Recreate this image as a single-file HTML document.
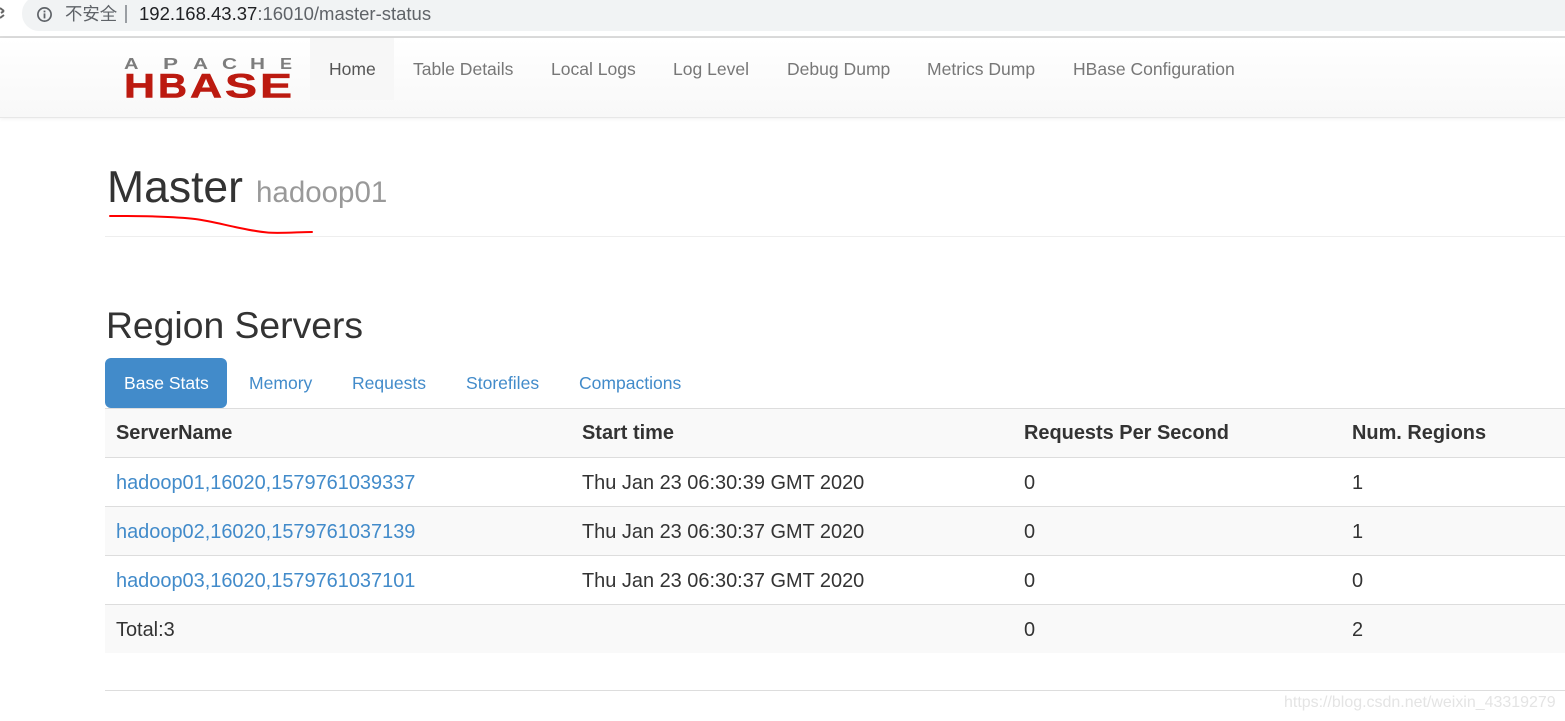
<!DOCTYPE html>
<html lang="en">
<head>
<meta charset="utf-8">
<title>Master: hadoop01</title>
<style>
html,body{margin:0;padding:0;background:#fff;}
body{width:1565px;height:721px;overflow:hidden;position:relative;font-family:"Liberation Sans","Noto Sans CJK SC",sans-serif;color:#333;}
.a{position:absolute;white-space:nowrap;}
.n{font-size:17.55px;line-height:24px;top:57px;color:#777;}
.t{font-size:17.55px;line-height:24px;top:371px;color:#428bca;}
.h{font-size:19.95px;font-weight:bold;line-height:28px;top:419px;color:#333;}
.c{font-size:19.95px;line-height:28px;color:#333;}
.l{color:#428bca;}
.r{position:absolute;left:105px;width:1460px;}
.ap{font-family:"Liberation Sans",sans-serif;font-weight:bold;font-size:16px;fill:#7d7d7d;}
.hb{font-family:"Liberation Sans",sans-serif;font-weight:bold;font-size:34.5px;fill:#bc1a10;stroke:#bc1a10;stroke-width:.6;}
</style>
</head>
<body>
<!-- browser bar -->
<div class="a" style="left:0;top:0;width:1565px;height:36px;background:#fff;"></div>
<div class="a" style="left:22px;top:-4px;width:1543px;height:35px;background:#f1f3f4;border-radius:17px 0 0 17px;"></div>
<svg class="a" style="left:0;top:4px" width="8" height="18" viewBox="0 0 8 18"><path d="M0 4 L4 7 M4 7 L1 9 M0 14 L4 11" stroke="#666" stroke-width="2" fill="none"/></svg>
<svg class="a" style="left:36px;top:6px" width="17" height="17" viewBox="0 0 17 17"><circle cx="8.5" cy="8.5" r="6.6" fill="none" stroke="#5f6368" stroke-width="1.7"/><rect x="7.6" y="7.4" width="1.8" height="5" fill="#5f6368"/><rect x="7.6" y="4.6" width="1.8" height="1.8" fill="#5f6368"/></svg>
<div class="a" style="left:65px;top:1.5px;font-size:17.4px;line-height:24px;color:#5f6368;font-family:'Noto Sans CJK SC','Liberation Sans',sans-serif;">不安全</div>
<div class="a" style="left:125px;top:5px;width:2px;height:18px;background:#9a9ea3;"></div>
<div class="a" style="left:139px;top:2px;font-size:18.5px;line-height:24px;color:#5f6368;"><span style="color:#202124">192.168.43.37</span>:16010/master-status</div>
<!-- navbar -->
<div class="a" style="left:0;top:36px;width:1565px;height:2px;background:#dcdcdc;"></div>
<div class="a" style="left:0;top:38px;width:1565px;height:79px;background:linear-gradient(#fff,#f8f8f8);border-bottom:1px solid #e7e7e7;box-shadow:0 1px 4px rgba(0,0,0,.06);"></div>
<div class="a" style="left:310px;top:38px;width:84px;height:62px;background:#f7f7f7;"></div>
<svg class="a" style="left:120px;top:54px" width="176" height="46" viewBox="0 0 176 46">
<text class="ap" x="4" y="15" textLength="14.5" lengthAdjust="spacingAndGlyphs">A</text>
<text class="ap" x="43" y="15" textLength="15" lengthAdjust="spacingAndGlyphs">P</text>
<text class="ap" x="73" y="15" textLength="15" lengthAdjust="spacingAndGlyphs">A</text>
<text class="ap" x="102" y="15" textLength="15" lengthAdjust="spacingAndGlyphs">C</text>
<text class="ap" x="130" y="15" textLength="15" lengthAdjust="spacingAndGlyphs">H</text>
<text class="ap" x="160" y="15" textLength="12" lengthAdjust="spacingAndGlyphs">E</text>
<text class="hb" x="4" y="43.6" textLength="31" lengthAdjust="spacingAndGlyphs">H</text>
<text class="hb" x="38" y="43.6" textLength="29" lengthAdjust="spacingAndGlyphs">B</text>
<text class="hb" x="70" y="43.6" textLength="32" lengthAdjust="spacingAndGlyphs">A</text>
<text class="hb" x="105" y="43.6" textLength="32" lengthAdjust="spacingAndGlyphs">S</text>
<text class="hb" x="140" y="43.6" textLength="32" lengthAdjust="spacingAndGlyphs">E</text>
</svg>
<div class="a n" style="left:329px;color:#555;">Home</div>
<div class="a n" style="left:413px;">Table Details</div>
<div class="a n" style="left:551px;">Local Logs</div>
<div class="a n" style="left:673px;">Log Level</div>
<div class="a n" style="left:787px;">Debug Dump</div>
<div class="a n" style="left:927px;">Metrics Dump</div>
<div class="a n" style="left:1073px;">HBase Configuration</div>
<!-- header -->
<div class="a" style="left:107px;top:161px;font-size:44.5px;line-height:54px;color:#333;">Master</div>
<div class="a" style="left:256px;top:175px;font-size:29.5px;line-height:36px;color:#999;">hadoop01</div>
<svg class="a" style="left:105px;top:210px" width="212" height="28" viewBox="0 0 212 28"><path d="M5 6 C20 6 38 6 50 6.5 C65 7 78 7.5 90 9 C105 11 118 14.5 130 17 C145 20 156 22.5 167 22.8 C182 23.2 195 22 207 22" fill="none" stroke="#f00" stroke-width="2" stroke-linecap="round"/></svg>
<div class="r" style="top:236px;height:1px;background:#eee;"></div>
<div class="a" style="left:106px;top:302px;font-size:37.3px;line-height:46px;color:#333;">Region Servers</div>
<!-- tabs -->
<div class="a" style="left:105px;top:358px;width:122px;height:50px;background:#428bca;border-radius:6px;"></div>
<div class="a t" style="left:124px;color:#fff;">Base Stats</div>
<div class="a t" style="left:249px;">Memory</div>
<div class="a t" style="left:352px;">Requests</div>
<div class="a t" style="left:466px;">Storefiles</div>
<div class="a t" style="left:579px;">Compactions</div>
<!-- table -->
<div class="r" style="top:408px;height:1px;background:#ddd;"></div>
<div class="r" style="top:409px;height:48px;background:#f9f9f9;"></div>
<div class="r" style="top:457px;height:1px;background:#ddd;"></div>
<div class="r" style="top:506px;height:1px;background:#ddd;"></div>
<div class="r" style="top:507px;height:48px;background:#f9f9f9;"></div>
<div class="r" style="top:555px;height:1px;background:#ddd;"></div>
<div class="r" style="top:604px;height:1px;background:#ddd;"></div>
<div class="r" style="top:605px;height:48px;background:#f9f9f9;"></div>
<div class="a h" style="left:116px;">ServerName</div>
<div class="a h" style="left:582px;">Start time</div>
<div class="a h" style="left:1024px;">Requests Per Second</div>
<div class="a h" style="left:1352px;">Num. Regions</div>

<div class="a c l" style="left:116px;top:469px;">hadoop01,16020,1579761039337</div>
<div class="a c" style="left:582px;top:469px;">Thu Jan 23 06:30:39 GMT 2020</div>
<div class="a c" style="left:1024px;top:469px;">0</div>
<div class="a c" style="left:1352px;top:469px;">1</div>

<div class="a c l" style="left:116px;top:518px;">hadoop02,16020,1579761037139</div>
<div class="a c" style="left:582px;top:518px;">Thu Jan 23 06:30:37 GMT 2020</div>
<div class="a c" style="left:1024px;top:518px;">0</div>
<div class="a c" style="left:1352px;top:518px;">1</div>

<div class="a c l" style="left:116px;top:567px;">hadoop03,16020,1579761037101</div>
<div class="a c" style="left:582px;top:567px;">Thu Jan 23 06:30:37 GMT 2020</div>
<div class="a c" style="left:1024px;top:567px;">0</div>
<div class="a c" style="left:1352px;top:567px;">0</div>

<div class="a c" style="left:116px;top:616px;">Total:3</div>
<div class="a c" style="left:1024px;top:616px;">0</div>
<div class="a c" style="left:1352px;top:616px;">2</div>

<div class="r" style="top:690px;height:1px;background:#ddd;"></div>
<div class="a" style="left:1284px;top:692px;font-size:15.97px;line-height:22px;color:#e4e4e4;">https://blog.csdn.net/weixin_43319279</div>
</body>
</html>
